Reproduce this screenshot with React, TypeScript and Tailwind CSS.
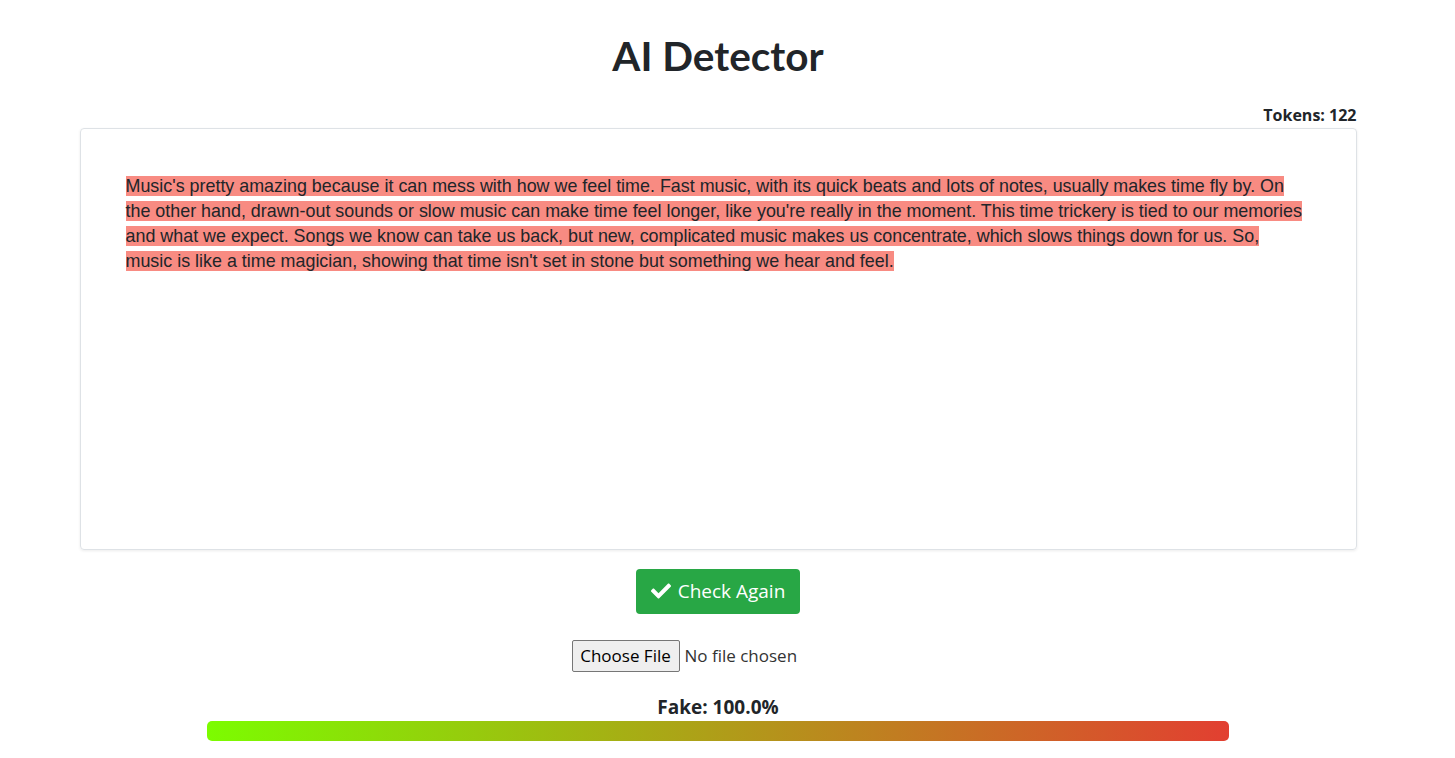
import React from "react";
import { FaCheck } from "react-icons/fa";

const text =
  "Music's pretty amazing because it can mess with how we feel time. Fast music, with its quick beats and lots of notes, usually makes time fly by. On the other hand, drawn-out sounds or slow music can make time feel longer, like you're really in the moment. This time trickery is tied to our memories and what we expect. Songs we know can take us back, but new, complicated music makes us concentrate, which slows things down for us. So, music is like a time magician, showing that time isn't set in stone but something we hear and feel.";

export default function App() {
  return (
    <div className="w-[1436px] bg-white text-[#212529] font-['Open_Sans',sans-serif] min-h-[758px]">
      <div className="mx-auto w-[1277px] flex flex-col">
        <h1 className="text-center font-['Lato',sans-serif] font-bold text-[40.5px] leading-[1] mt-[36px] text-[#212529]">
          AI Detector
        </h1>
        <div className="text-right font-bold text-[16px] leading-[20px] mt-[28px]">Tokens: 122</div>
        <div className="mt-[3px] h-[422px] border border-[#dee2e6] rounded-[4px] shadow-[0_1px_3px_rgba(0,0,0,0.08)] px-[45px] pt-[45px]">
          <p className="font-['Liberation_Sans',Arial,sans-serif] text-[17.9px] leading-[25px] text-[#212529]">
            <span className="bg-[#f88b82]">{text}</span>
          </p>
        </div>
        <div className="flex justify-center mt-[19px]">
          <button className="flex items-center gap-[7px] h-[45px] px-[15px] rounded-[4px] bg-[#28a745] text-white text-[19px]">
            <FaCheck className="w-[20px] h-[20px]" />
            <span>Check Again</span>
          </button>
        </div>
        <div className="flex justify-center mt-[26px]">
          <div className="w-[293px] flex items-center text-[17px]">
            <span className="h-[32px] w-[108px] flex items-center justify-center border border-[#767676] bg-[#efefef] rounded-[2px] text-[#000]">
              Choose File
            </span>
            <span className="ml-[5px] text-[#333]">No file chosen</span>
          </div>
        </div>
        <div className="text-center font-bold text-[19px] leading-[22px] mt-[24px]">Fake: 100.0%</div>
        <div className="mx-auto w-[80%] h-[20px] rounded-[5px] bg-[linear-gradient(to_right,#7cfc00,#e23f31)] mt-[3px]"></div>
      </div>
    </div>
  );
}
